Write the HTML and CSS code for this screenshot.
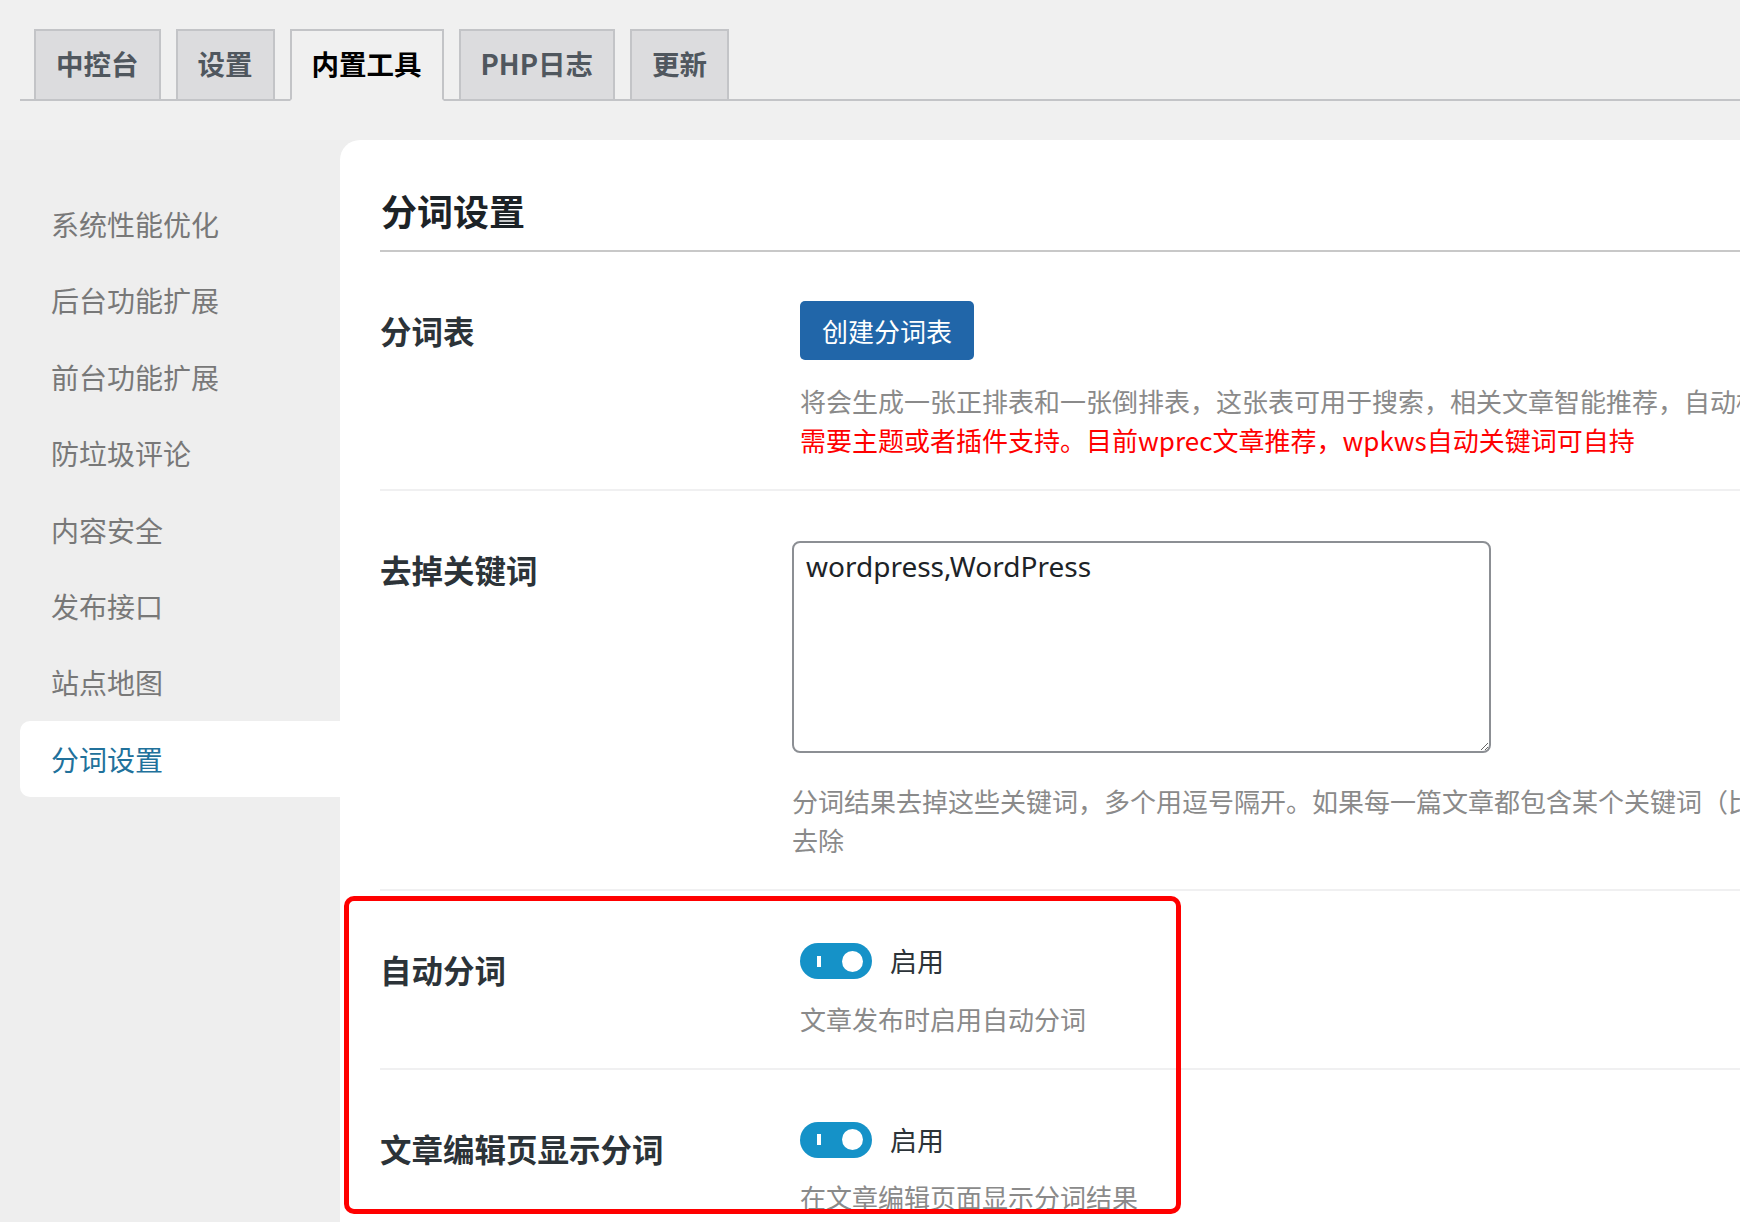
FILE: index.html
```html
<!DOCTYPE html>
<html lang="zh-CN">
<head>
<meta charset="utf-8">
<title>分词设置</title>
<link rel="stylesheet" href="styles.css">
</head>
<body>
<div class="page">
  <nav class="tabs">
    <a class="tab">中控台</a>
    <a class="tab">设置</a>
    <a class="tab active">内置工具</a>
    <a class="tab">PHP日志</a>
    <a class="tab">更新</a>
  </nav>
  <div class="layout">
    <aside class="side">
      <ul class="menu">
        <li class="item">系统性能优化</li>
        <li class="item">后台功能扩展</li>
        <li class="item">前台功能扩展</li>
        <li class="item">防垃圾评论</li>
        <li class="item">内容安全</li>
        <li class="item">发布接口</li>
        <li class="item">站点地图</li>
        <li class="item current">分词设置</li>
      </ul>
    </aside>
    <main class="panel">
      <h2 class="title">分词设置</h2>
      <div class="row">
        <div class="th">分词表</div>
        <div class="td">
          <button class="btn">创建分词表</button>
          <p class="desc indent">将会生成一张正排表和一张倒排表，这张表可用于搜索，相关文章智能推荐，自动标签等功能，<br><span class="red">需要主题或者插件支持。目前wprec文章推荐，wpkws自动关键词可自持</span></p>
        </div>
      </div>
      <div class="row">
        <div class="th">去掉关键词</div>
        <div class="td">
          <textarea class="area">wordpress,WordPress</textarea>
          <p class="desc area-desc">分词结果去掉这些关键词，多个用逗号隔开。如果每一篇文章都包含某个关键词（比如网站名称），可以在这里将其<br>去除</p>
        </div>
      </div>
      <div class="row">
        <div class="th">自动分词</div>
        <div class="td sw-td">
          <label class="switch-line">
            <span class="switch"><span class="bar"></span><span class="knob"></span></span>
            <span class="on">启用</span>
          </label>
          <p class="desc indent sw-desc">文章发布时启用自动分词</p>
        </div>
      </div>
      <div class="row">
        <div class="th">文章编辑页显示分词</div>
        <div class="td sw-td">
          <label class="switch-line">
            <span class="switch"><span class="bar"></span><span class="knob"></span></span>
            <span class="on">启用</span>
          </label>
          <p class="desc indent sw-desc">在文章编辑页面显示分词结果</p>
        </div>
      </div>
    </main>
  </div>
  <div class="mark"></div>
</div>
</body>
</html>
```

FILE: styles.css
```css
html, body {
  margin: 0;
  padding: 0;
  width: 1740px;
  height: 1222px;
  overflow: hidden;
  background: #f0f0f0;
  font-family: "Noto Sans CJK SC", "Noto Sans", sans-serif;
}

.page {
  position: relative;
  width: 1740px;
  height: 1222px;
  overflow: hidden;
}

.tabs {
  display: flex;
  align-items: flex-end;
  gap: 15px;
  margin-left: 20px;
  padding-top: 29px;
  padding-left: 14px;
  border-bottom: 2px solid #c3c4c7;
}

.tab {
  display: flex;
  align-items: center;
  box-sizing: border-box;
  height: 72px;
  margin-bottom: -2px;
  padding: 0 20px 3px 20px;
  border: 2px solid #c3c4c7;
  background: #dcdcde;
  color: #50575e;
  font-size: 27.5px;
  font-weight: 700;
  line-height: 1;
}

.tab.active {
  background: #f0f0f0;
  border-bottom-color: #f0f0f0;
  color: #000;
}

.layout {
  display: flex;
  margin-top: 39px;
  background: #eeeeee;
  min-height: 1081px;
}

.side {
  width: 320px;
  margin-left: 20px;
  flex: none;
}

.menu {
  list-style: none;
  margin: 0;
  padding: 46px 0 0 0;
}

.item {
  height: 76.4px;
  line-height: 76.4px;
  padding-left: 31px;
  font-size: 28px;
  color: #787878;
}

.item.current {
  background: #fff;
  color: #21719b;
  border-radius: 10px 0 0 10px;
}

.panel {
  flex: 1;
  background: #fff;
  border-top-left-radius: 20px;
  padding-left: 40px;
  min-width: 0;
}

.title {
  margin: 0;
  padding: 47px 0 16px 1px;
  font-size: 36px;
  line-height: 47px;
  font-weight: 700;
  color: #1d2327;
  border-bottom: 2px solid #c8c8c8;
}

.row {
  display: flex;
  border-bottom: 2px solid #f0f0f1;
}

.th {
  width: 412px;
  flex: none;
  box-sizing: border-box;
  padding-top: 58px;
  font-size: 31.5px;
  line-height: 40px;
  font-weight: 700;
  color: #2c3338;
}

.td {
  flex: 1;
  padding: 50px 0 30px 0;
  min-width: 0;
}

.row:first-of-type .td {
  padding-top: 49px;
}

.sw-td {
  padding-top: 52px;
  padding-bottom: 30px;
}

.btn {
  display: block;
  margin-left: 8px;
  height: 59px;
  width: 174px;
  padding: 0;
  border: none;
  border-radius: 5px;
  background: #2166a9;
  color: #fff;
  font-family: inherit;
  font-size: 26px;
  line-height: 59px;
}

.desc {
  margin: 21px 0 0 0;
  font-size: 26px;
  line-height: 39px;
  color: #8a8a8a;
  white-space: nowrap;
}

.indent {
  margin-left: 8px;
}

.red {
  color: #ff0000;
}

.area {
  display: block;
  box-sizing: border-box;
  width: 699px;
  height: 212px;
  margin: 0;
  padding: 4px 12px;
  border: 2px solid #8c8f94;
  border-radius: 8px;
  font-family: "Noto Sans", "Noto Sans CJK SC", sans-serif;
  font-size: 28px;
  line-height: 39px;
  color: #1d2327;
  background: #fff;
  resize: both;
}

.area-desc {
  margin-top: 28px;
}

.switch-line {
  display: flex;
  align-items: center;
  gap: 18px;
  margin-left: 8px;
  height: 36px;
}

.switch {
  position: relative;
  display: block;
  width: 72px;
  height: 36px;
  border-radius: 18px;
  background: #1592c8;
}

.bar {
  position: absolute;
  left: 17px;
  top: 12.5px;
  width: 4px;
  height: 11px;
  background: #fff;
}

.knob {
  position: absolute;
  right: 9px;
  top: 7.5px;
  width: 21px;
  height: 21px;
  border-radius: 50%;
  background: #fff;
}

.on {
  font-size: 27px;
  line-height: 36px;
  color: #2c3338;
}

.sw-desc {
  margin-top: 19.5px;
}

.mark {
  position: absolute;
  left: 344px;
  top: 896px;
  width: 837px;
  height: 318px;
  box-sizing: border-box;
  border: 5px solid #ff0000;
  border-radius: 10px;
  pointer-events: none;
}
```
